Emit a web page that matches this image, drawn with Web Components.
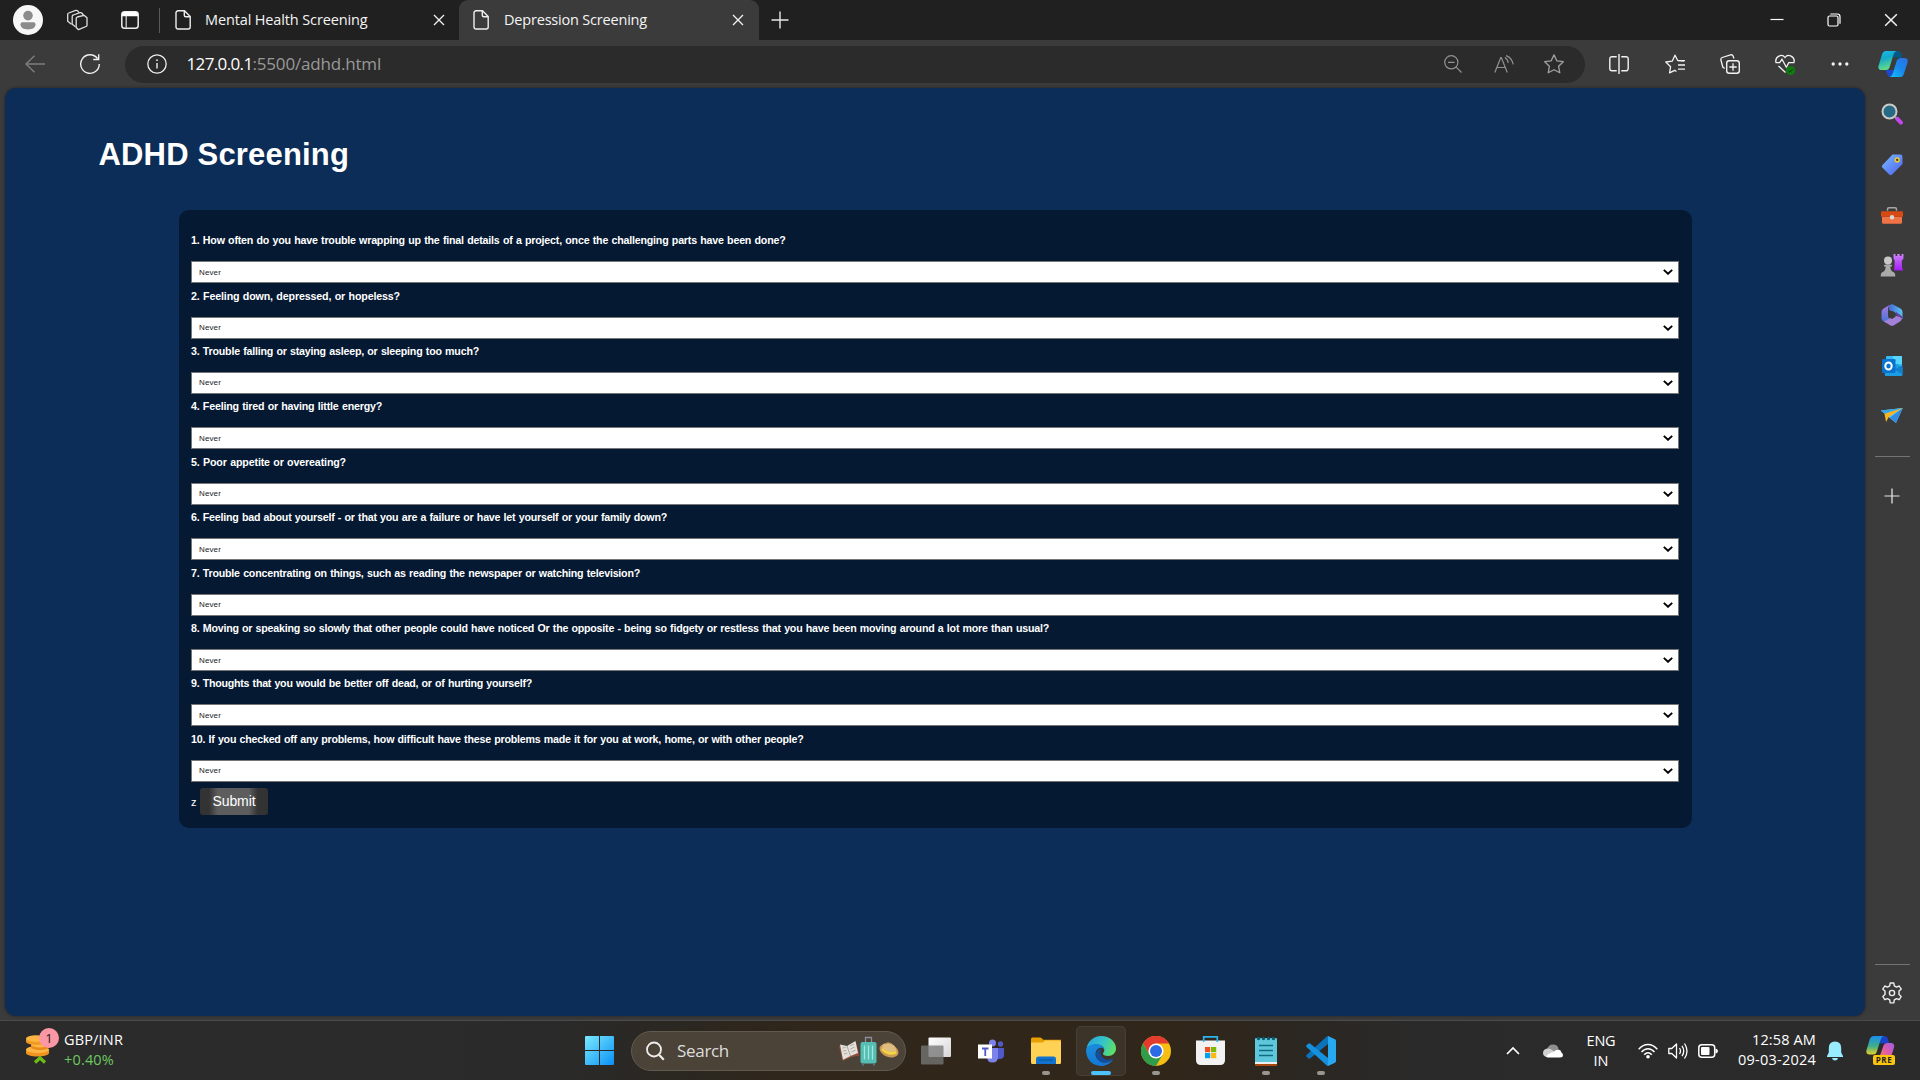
<!DOCTYPE html>
<html lang="en">
<head>
<meta charset="utf-8">
<title>Depression Screening</title>
<style>
html,body{margin:0;height:100%;overflow:hidden;background:#3b3b3b}
body{font-family:"Open Sans","Noto Sans",sans-serif;color:#fff}
</style>
</head>
<body>
<desktop-shell></desktop-shell>
<script>
const ICONS = {
avatar:['0 0 30 30','<circle cx="15" cy="15" r="15" fill="#f7f7f7"/><circle cx="15" cy="10.6" r="4.8" fill="#8b8b8b"/><path d="M7.5 19.3a2 2 0 0 1 2-2h11a2 2 0 0 1 2 2c0 3.400-3.200 5.200-7.500 5.200s-7.500-1.800-7.500-5.200z" fill="#8b8b8b"/>'],
spaces:['0 0 22 22','<g fill="none" stroke="#e0e0e0" stroke-width="1.300" stroke-linejoin="round"><path d="M10.200 9.300Q10.200 8.300 11.200 8L18 6.300l3 2.500v7.400q0 1-1 1.300L12.500 20.700 10.200 18.500z"/><path d="M9.500 17.800 6.200 15.200V7.400Q6.200 6.300 7.300 6L14 3.700q1.200-.3 2 .6l1.500 1.700"/><path d="M5.500 15.300 1.700 12.300V5.400Q1.700 4.300 2.700 4L9.700 1.400q1.200-.3 2 .5l1.300 1.700"/></g>'],
tabact:['0 0 18 18','<rect x=".8" y=".8" width="16.400" height="16.400" rx="2.800" fill="none" stroke="#eee" stroke-width="1.500"/><path d="M1 5.300V3.500A2.500 2.500 0 0 1 3.500 1h11A2.500 2.500 0 0 1 17 3.500v1.800z" fill="#fff"/><path d="M5.200 5v12" stroke="#ccc" stroke-width="1.300"/>'],
doc:['0 0 16 20','<path d="M3 .8h6.500L15.200 6.500V17a2 2 0 0 1-2 2H3a2 2 0 0 1-2-2V2.800a2 2 0 0 1 2-2zM9.300 1v4.200a1.500 1.500 0 0 0 1.500 1.500H15" fill="none" stroke="#eee" stroke-width="1.400"/>'],
x:['0 0 12 12','<path d="M1 1l10 10M11 1 1 11" stroke="#f2f2f2" stroke-width="1.300" fill="none"/>'],
plus:['0 0 18 18','<path d="M9 .5v17M.5 9h17" stroke="#e8e8e8" stroke-width="1.400"/>'],
min:['0 0 14 14','<path d="M.5 6.500h13" stroke="#fff" stroke-width="1.200"/>'],
restore:['0 0 14 14','<rect x="1" y="3" width="10" height="10" rx="1.500" fill="none" stroke="#fff" stroke-width="1.200"/><path d="M3.300 1h7A2.700 2.700 0 0 1 13 3.700v7" fill="none" stroke="#fff" stroke-width="1.200"/>'],
back:['0 0 20 18','<path d="M20 9H1.200M9.500.8 1 9l8.500 8.200" fill="none" stroke="#7d7d7d" stroke-width="1.400"/>'],
reload:['0 0 22 22','<path d="M18.500 5.500A9.300 9.300 0 1 0 20.300 11M19.700 1.200v5.300h-5.500" fill="none" stroke="#f0f0f0" stroke-width="1.400"/>'],
info:['0 0 20 20','<circle cx="10" cy="10" r="9.200" fill="none" stroke="#eee" stroke-width="1.300"/><path d="M10 9v5.500" stroke="#eee" stroke-width="1.400"/><circle cx="10" cy="6.200" r=".9" fill="#eee"/>'],
zoomout:['0 0 18 18','<circle cx="7.300" cy="7.300" r="6.600" fill="none" stroke="#929292" stroke-width="1.200"/><path d="M4 7.300h6.600M12.200 12.200l5.300 5.300" stroke="#929292" stroke-width="1.200"/>'],
aloud:['0 0 20 18','<path d="M.8 17.500 6.800 2.500h.5l6 15M3 12.500h8M10.800 2.500q3 1.600 3.500 5.300M12 .6q5.800 2 7.200 8.800" fill="none" stroke="#929292" stroke-width="1.200"/>'],
star:['0 0 20 20','<path d="m10 .9 2.800 5.900 6.500.9-4.700 4.600 1.200 6.500-5.800-3.100-5.800 3.100 1.200-6.500L.7 7.700l6.500-.9z" fill="none" stroke="#a0a0a0" stroke-width="1.300" stroke-linejoin="round"/>'],
split:['0 0 20 20','<path d="M7.700 2.700H3A2.200 2.200 0 0 0 .8 4.900v9.700A2.200 2.200 0 0 0 3 16.800h4.700M12.300 2.700H17a2.200 2.200 0 0 1 2.200 2.200v9.700a2.200 2.200 0 0 1-2.200 2.200h-4.700M10 0v20" fill="none" stroke="#f2f2f2" stroke-width="1.400"/>'],
favs:['0 0 20 20','<path d="M11.400 17.500 9.700 16.300 4.600 18.900l1-6.200L.8 8l6.500-.9L10 1.200 12.700 6.500l6.300.5M12.700 6.600H20M13 11h7M13 15.200h7M11.300 17.200 9.700 16.300" fill="none" stroke="#f2f2f2" stroke-width="1.300" stroke-linejoin="round"/>'],
coll:['0 0 20 20','<rect x="6.700" y="6.700" width="12.600" height="12.600" rx="2.500" fill="none" stroke="#f2f2f2" stroke-width="1.400"/><path d="M13 9.300v7.400M9.300 13h7.400M4.700 14.500 2.800 13 .9 6Q.6 4.200 2.200 3.500L10.500.8q2-.4 2.700 1.400l.7 2.300" fill="none" stroke="#f2f2f2" stroke-width="1.300"/>'],
heart:['0 0 20 21','<path d="M.9 8.500C-.2 2.500 7-1 10 3.500 13-1 20.200 2.500 19.100 8.500M.5 8.700h4.200L7 5.200l4.300 8 2.500-4.500h5.500M3.500 12l7 6.500" fill="none" stroke="#f2f2f2" stroke-width="1.300"/><circle cx="15.600" cy="16.500" r="4.500" fill="#0f7b0f"/><path d="m13.500 16.700 1.500 1.400 2.700-2.900" fill="none" stroke="#073d07" stroke-width="1"/>'],
dots:['0 0 18 6','<g fill="#f2f2f2"><circle cx="2.200" cy="3" r="1.700"/><circle cx="9" cy="3" r="1.700"/><circle cx="15.800" cy="3" r="1.700"/></g>'],
copilot:['0 0 30 28','<defs><linearGradient id="a" x1="0" y1="0" x2=".3" y2="1"><stop offset="0" stop-color="#19bdf1"/><stop offset=".45" stop-color="#14a9c9"/><stop offset="1" stop-color="#65dd86"/></linearGradient><linearGradient id="b" x1="1" y1="0" x2="0" y2="1"><stop offset="0" stop-color="#2e6ee0"/><stop offset=".5" stop-color="#1889ee"/><stop offset="1" stop-color="#12c5f4"/></linearGradient></defs><path d="M13 1h6q3.300 0 4.300 3l1 3.500h-9z" fill="#075985"/><path d="M16 27h-3q-3 0-4-3.200L7.500 20h10z" fill="#1b48ce"/><path d="M8 1h10.500q-2.200.8-3 3.500l-4 13q-.9 2.500-3.500 2.500H3.500Q-.2 20 .5 16L4 4.500Q5 1 8 1z" fill="url(#a)"/><path d="M22 27H11.500q2.500-.7 3.300-3.400l4-13q.9-2.600 3.700-2.600h4q3.700 0 3.200 4L26 23.400Q25 27 22 27z" fill="url(#b)"/>'],
sSearch:['0 0 24 24','<circle cx="9.500" cy="9.500" r="7" fill="#276a85" stroke="#c9cac8" stroke-width="2"/><path d="m14.700 14.500 2.200 2.200" stroke="#aaa" stroke-width="2"/><path d="m17.300 16.800 3.700 3.800" stroke="#c547ef" stroke-width="4" stroke-linecap="round"/>'],
sTag:['0 0 24 24','<defs><linearGradient id="t" x1="0" y1="0" x2="1" y2="1"><stop offset="0" stop-color="#7bbcff"/><stop offset="1" stop-color="#4b5df0"/></linearGradient></defs><g transform="translate(0 .6)"><path d="M12.500 2h7.800A2.300 2.300 0 0 1 22.500 4.300v7.200L11.800 22.200q-1.200.8-2.300 0L2.300 15q-.9-1.200 0-2.400z" fill="url(#t)"/><circle cx="17.200" cy="7.300" r="1.900" fill="#333" stroke="#f4cc25" stroke-width="1.500"/></g>'],
sTool:['0 0 24 24','<g transform="translate(0 .8)"><path d="M7.500 7V5.500Q7.500 4 9 4h6q1.500 0 1.500 1.500V7" fill="none" stroke="#a7a7a7" stroke-width="1.500"/><path d="M2 13h20v5.500a1.500 1.500 0 0 1-1.500 1.500h-17A1.500 1.500 0 0 1 2 18.500z" fill="#f07346"/><path d="M2 7.500h20q1 0 1 1v4.500H1V8.500q0-1 1-1z" fill="#d94a13"/><circle cx="12" cy="13.500" r="2.200" fill="#d8d8d8"/></g>'],
sGame:['0 0 24 24','<defs><linearGradient id="g" y1="0" y2="1" x2="0"><stop offset="0" stop-color="#cb83fa"/><stop offset="1" stop-color="#a51bf8"/></linearGradient></defs><path d="M13.500 1h2v2h1.800V1h2.400v2h1.800V1h2v4.500L21.700 8l.5 7 1 2.500h-9L14.700 8l-1.200-2.500z" fill="url(#g)"/><circle cx="8" cy="7.500" r="4" fill="#c8c8c8"/><path d="M4 12Q8 10.500 12 12v1.500h-1.700q.3 4.500 2.900 5.500 2.300.7 2 4.500H.8q-.3-3.800 2-4.500Q5.400 18 5.700 13.500H4z" fill="#aaa"/>'],
s365:['0 0 24 24','<defs><linearGradient id="q" x1="0" x2="1"><stop offset="0" stop-color="#4667d2"/><stop offset="1" stop-color="#58c5f2"/></linearGradient><linearGradient id="r" y1="0" y2="1" x2="0"><stop offset="0" stop-color="#a97bdc"/><stop offset="1" stop-color="#3f74da"/></linearGradient></defs><path d="M9 2.500 12 1l8.500 4.500q2 1 2 3.500v7l-7-5.500-3.500-2-3-1.500z" fill="url(#q)"/><path d="M10 1.800 3.500 5.500q-2 1.200-2 3.500v6q0 2.500 2 3.500l3 1.500 4-3.500q-2.500-1.500-2.500-4V6q0-2.500 2-4.200z" fill="url(#r)"/><path d="m4 18.500 11-6 7 2v.5q0 2.500-2 3.500L13.500 22.500q-1.500.8-3 0z" fill="#a481d9"/><path d="m15.500 11 7 5q0-2-.2-2.500L16 9z" fill="#6440a0"/><path d="m9 9.500 3-1.700 3.500 2v4L12 16l-3.500-2z" fill="#3b3b3b"/>'],
sOut:['0 0 24 24','<rect x="6" y="2" width="16" height="12" rx="1" fill="#35baf2"/><rect x="13" y="2" width="9" height="8" fill="#55d5ff"/><path d="M4 10h13.500l5 4v6.500a1.500 1.500 0 0 1-1.500 1.500H5z" fill="#1b9de3"/><path d="m14.500 15.500 8-4.500v9.500z" fill="#1280ce"/><rect x="2" y="5" width="13.500" height="14" rx="1.200" fill="#0873cf"/><ellipse cx="8.500" cy="12" rx="3.200" ry="3.500" fill="none" stroke="#fff" stroke-width="2"/>'],
sSend:['0 0 24 24','<path d="M.8 6.500 22.700 4 16 19l-5-4z" fill="#59c9fa"/><path d="m10 13.500 12.700-9.500L16 19z" fill="#348be4"/><path d="M.8 6.500 22.700 4 7 11.500z" fill="#37a7ea"/><path d="M4.500 9.700 22.700 4 9 12.800 6 18z" fill="#f8b51e"/>'],
gear:['0 0 22 22','<path d="M9.200 1h3.600l.5 2.900 2.200 1.200 2.700-1.100 2 3.200-2.200 1.800v3.500l2.200 2-2 3.200-2.700-1.100-2.200 1.300-.5 3H9.200l-.5-3-2.200-1.300L3.800 17.700l-2-3.200 2.200-2V9L1.800 7.200l2-3.200 2.700 1.100 2.200-1.200z" fill="none" stroke="#eee" stroke-width="1.400" stroke-linejoin="round"/><circle cx="11" cy="11" r="2.600" fill="none" stroke="#eee" stroke-width="1.400"/>'],
coins:['0 0 24 30','<path d="M0 15.500v3.200c0 5 23 5 23 0v-3.200z" fill="#ef9420"/><ellipse cx="11.500" cy="15.500" rx="11.500" ry="3.600" fill="#fdb642"/><path d="M5 10.500v2.500c0 4 18 4 18 0v-2.500z" fill="#e88a1c"/><ellipse cx="14" cy="10.500" rx="9" ry="3" fill="#fdb642"/><path d="M0 4.500V7.500c0 4.500 20 4.500 20 0V4.500z" fill="#f09a24"/><ellipse cx="10" cy="4.500" rx="10" ry="3.200" fill="#fdb642"/><path d="m9 28.500 5-4.500 5 4.500" fill="none" stroke="#6abf14" stroke-width="3.300"/>'],
start:['0 0 29 29','<defs><linearGradient id="w" x1="0" y1="0" x2="1" y2="1"><stop offset="0" stop-color="#7aeaff"/><stop offset="1" stop-color="#0a90f5"/></linearGradient></defs><path d="M0 1q0-1 1-1h13v14H0zM15 0h13q1 0 1 1v13H15zM0 15h14v14H1q-1 0-1-1zM15 15h14v13q0 1-1 1H15z" fill="url(#w)"/>'],
find:['0 0 20 20','<circle cx="9" cy="8.500" r="7" fill="none" stroke="#eee" stroke-width="1.800"/><path d="m14 13.700 4.800 5" stroke="#eee" stroke-width="2.200"/>'],
travel:['0 0 60 30','<path d="m0 10 8 1 9-4.500 3.500 13L13 21l-9.500 4z" fill="#8b4f3a"/><path d="m1 8.500 7 1.500 8.500-5 2.500 12-7 2.800-8 4z" fill="#e5e1da"/><path d="M8 10l3.500 10M3.500 12l3-.5M4 15l3.300-.5M5 18l3.300-.8M11 10l4-2M11.500 13l4-2M12.500 16l4-2" stroke="#999" stroke-width=".8"/><path d="M26.500 7V1.500h6V7" fill="none" stroke="#8d8da0" stroke-width="1.300"/><rect x="21.500" y="6" width="16" height="21.500" rx="2" fill="#55bdb3"/><path d="M25.500 9.500v14M29.500 9.500v14M33.500 9.500v14" stroke="#a0e8df" stroke-width="1.300"/><path d="M24 27.500v2M35 27.500v2" stroke="#5b6e8d" stroke-width="2"/><ellipse cx="50" cy="14.500" rx="9.800" ry="6.500" transform="rotate(22 50 14.500)" fill="#c99b5a"/><path d="M43 13q0-6.500 6-6.300 7.500.3 8.500 9-7 3.300-14.500-2.700z" fill="#dfbd80"/><path d="M46 8q4-2.800 8 1" fill="none" stroke="#ac8047" stroke-width="1"/><path d="M43 12q6.500 6 14.300 3.200l.2 2.600q-9 3-15-3.800z" fill="#f5d53c"/>'],
task:['0 0 30 28','<defs><linearGradient id="v" x1="0" y1="0" x2="1" y2="1"><stop offset="0" stop-color="#fff"/><stop offset="1" stop-color="#d6d6d6"/></linearGradient></defs><rect x="7.500" y=".5" width="22.500" height="19.500" rx="1" fill="url(#v)"/><rect x="0" y="8.500" width="22.500" height="19" rx="1" fill="#777" fill-opacity=".78"/>'],
teams:['0 0 26 24','<circle cx="22.500" cy="5" r="2.700" fill="#5059c9"/><path d="M18 9h8v7q0 4-4.500 4H18z" fill="#5059c9"/><circle cx="14.500" cy="4" r="3.500" fill="#7b83eb"/><path d="M8.500 9H20v9q0 5.500-5.500 5.500T9 18z" fill="#7b83eb"/><rect x="0" y="5.500" width="14" height="14" fill="#fff"/><path d="M4 9.500h6.500M7.250 9v8" stroke="#5059c9" stroke-width="1.800"/>'],
folder:['0 0 30 28','<path d="M0 2q0-1.500 1.500-1.500H9q1 0 2 1l1.200 1.300H30V8H0z" fill="#e6a100"/><path d="M0 5.500h12L14 3.500h14.500q1.500 0 1.500 1.500v21q0 1-1.500 1h-27Q0 27 0 25.500z" fill="#ffd255"/><path d="M5 27v-5q0-2.500 2.500-2.500h15Q25 19.500 25 22v5z" fill="#1173cd"/><path d="M8 23h14" stroke="#07519c" stroke-width="1"/>'],
edge:['0 0 30 30','<defs><linearGradient id="e" x1="0" x2="1" y1=".3" y2=".6"><stop offset="0" stop-color="#27a6e2"/><stop offset=".55" stop-color="#37c6c4"/><stop offset="1" stop-color="#61e060"/></linearGradient><linearGradient id="f" x1="0" y1="0" x2=".4" y2="1"><stop offset="0" stop-color="#1a8ee0"/><stop offset="1" stop-color="#1377d3"/></linearGradient></defs><path d="M.5 13C1.500 5.500 7.500 0 15 0c9 0 15 6 15 12.500 0 4.500-3.500 7.500-8 7.500-3.500 0-5-1.200-5-2.300 0-1 1.300-1.400 1.300-3.700C18.300 10 14 8.500 10 8.500S2 10 .5 13z" fill="url(#e)"/><path d="M.2 13C2 9.500 6 8 9.500 8c5 0 8.800 2.700 8.800 6 0-1.500-2.500-3-5-2-5 2-5.300 9.500.3 13 4.500 2.800 10 1.500 13.400-1.500C24.500 27.500 20 30 15 30 6 30-.8 22.500.2 13z" fill="url(#f)"/><path d="M10 19c.5 6 7 9.500 13.500 6.500 2-.8 3.800-2.300 3.500-2.700-.3-.3-1.500.5-3.500.8-5 .7-8.500-2.600-9-6.600-.3-2 .3-3.600 1-4.600-3 .5-5.800 3-5.500 6.600z" fill="#124e9d"/>'],
chrome:['0 0 30 30','<circle cx="15" cy="15" r="15" fill="#f7bf14"/><path d="M2 7.500A15 15 0 0 1 28 7.500H15L8.500 18.700z" fill="#e33b2e"/><path d="M2 7.500A15 15 0 0 0 15 30l6.500-11.200H8.500z" fill="#2f9d49"/><circle cx="15" cy="15" r="7.600" fill="#fff"/><circle cx="15" cy="15" r="6" fill="#2d6be6"/>'],
store:['0 0 30 29','<path d="M0 4.500h29V24q0 5-5 5H5q-5 0-5-5z" fill="#f2f2f2"/><path d="M7.700 6V.9h13.600V6" fill="none" stroke="#2bb5ed" stroke-width="1.700"/><path fill="#f04e23" d="M9 11h5.200v5.200H9z"/><path fill="#7cb900" d="M15 11h5.200v5.200H15z"/><path fill="#00a2ed" d="M9 17h5.200v5.200H9z"/><path fill="#fdb813" d="M15 17h5.200v5.200H15z"/>'],
note:['0 0 22 30','<path d="M0 25h22v4q0 1-1 1H1q-1 0-1-1z" fill="#a8480f"/><path d="M0 24h22v4H0z" fill="#eee"/><path d="M0 3q0-1 1-1h20q1 0 1 1v23H0z" fill="#5fc7dc"/><path d="M4 9.500h14M4 14.500h14M4 19.500h14" stroke="#126d84" stroke-width="1.700"/><g fill="#0d5a70"><circle cx="3.500" cy="2.500" r="1.700"/><circle cx="8.500" cy="2.500" r="1.700"/><circle cx="13.500" cy="2.500" r="1.700"/><circle cx="18.500" cy="2.500" r="1.700"/></g>'],
code:['0 0 30 30','<path d="m22 0 7 3.200q1 .6 1 1.700v20.200q0 1.100-1 1.700L22 30z" fill="#27a9f1"/><path d="M22 8 4 22.500q-.8.500-1.500 0L.5 20.800q-.8-.9 0-1.700L20.500.800Q21.200.2 22 0z" fill="#0a73ba"/><path d="M22 22 4 7.500q-.8-.5-1.500 0L.5 9.200q-.8.900 0 1.700l20 18.300q.7.600 1.500.8z" fill="#1690dc"/>'],
up:['0 0 14 9','<path d="m1 8 6-6 6 6" fill="none" stroke="#fff" stroke-width="1.700"/>'],
cloud:['0 0 20 14','<path d="M4 6Q5 .5 10 .5q4.500 0 5.500 4L10 9z" fill="#8f8f8f"/><path d="M4.500 4.500Q8 4 10.500 7L14 9l-9 4Q0 13 0 9q0-4 4.500-4.500z" fill="#cfcfcf"/><path d="M3 12.500Q6 8.500 10.500 8q2.500-3 5-2.500 2.500.7 3 3Q20 9.500 20 11q0 2.500-3 2.500H5q-1.500 0-2-1z" fill="#fff"/>'],
wifi:['0 0 20 16','<g fill="none" stroke="#fff" stroke-width="1.500"><path d="M.7 6.200Q5 1.500 10 1.500t9.300 4.700M3.500 9Q6.500 5.700 10 5.700T16.500 9M6.200 11.700Q8 9.700 10 9.700t3.800 2"/></g><circle cx="10" cy="13.700" r="1.800" fill="#fff"/>'],
sound:['0 0 20 18','<path d="M.8 6.500h3L8.500 2v14L3.800 11.500h-3zM11.500 6q2 3 0 6M14 3.800q3.500 5.200 0 10.400M16.500 1.500q5 7.500 0 15" fill="none" stroke="#fff" stroke-width="1.300" stroke-linejoin="round"/>'],
batt:['0 0 20 14','<rect x=".8" y=".8" width="15.900" height="12.400" rx="3" fill="none" stroke="#fff" stroke-width="1.500"/><rect x="3" y="3" width="8.500" height="8" rx="1" fill="#fff"/><path d="M17.500 4.500Q20 5 20 7t-2.500 2.500z" fill="#fff"/>'],
bell:['0 0 16 20','<path d="M8 .5q6.200 0 6.200 6.500v4.500L16 15v1H0v-1l1.800-3.500V7Q1.800.500 8 .5zM5 17h6q-.5 2.500-3 2.500T5 17z" fill="#99ebff"/>'],
pre:['0 0 30 29','<defs><linearGradient id="m" x1="0" y1="0" x2="0" y2="1"><stop offset="0" stop-color="#198ff0"/><stop offset=".55" stop-color="#3eae8a"/><stop offset="1" stop-color="#e8cf25"/></linearGradient><linearGradient id="n" x1="1" y1="0" x2="0" y2="1"><stop offset="0" stop-color="#a25bea"/><stop offset=".5" stop-color="#dd5daa"/><stop offset="1" stop-color="#f58151"/></linearGradient></defs><path d="M12 0h6q3 0 4 3l1.200 4.500h-9z" fill="#1c40c7"/><path d="M8 0h9.500q-2 .8-2.800 3.500l-4 12.500q-.8 2.500-3.200 2.500H3.500Q-.5 18.500.5 14L3.700 3.500Q4.700 0 8 0z" fill="url(#m)"/><path d="M20 22.500h-7l4.500-13Q18.300 7 21 7h4q4 0 3 4.500l-2.500 8q-1 3-5.500 3z" fill="url(#n)"/>'],
chev:['0 0 10 6','<path d="m.8.9 4.200 3.900L9.200.9" fill="none" stroke="#000" stroke-width="1.900"/>']
};
const define = (name, markup, after) => {
  const t = document.createElement('template');
  customElements.define(name, class extends HTMLElement {
    connectedCallback() {
      if (this.shadowRoot) return;
      const r = this.attachShadow({mode: 'open'});
      t.innerHTML = typeof markup === 'function' ? markup(this) : markup;
      r.append(t.content.cloneNode(true));
      if (after) after(this, r);
    }
  });
};

// An inline drawing centred in a cell: s = drawing width, w = cell width.
define('ui-icon', el => {
  const [vb, body] = ICONS[el.getAttribute('n')];
  const d = vb.split(' ');
  const s = el.getAttribute('s') || d[2];
  const h = s * d[3] / d[2];
  const w = el.getAttribute('w');
  return `<style>:host{display:flex;flex:none;align-items:center;justify-content:center;${w ? `width:${w}px` : ''}}svg{display:block;flex:none}</style><svg width="${s}" height="${h}" viewBox="${vb}">${body}</svg>`;
});

// A single line of text, tracked to a set width.
define('fit-text', `<style>:host{display:block;white-space:nowrap;flex:none}span{display:inline-block}</style><span><slot></slot></span>`, (el, r) => {
  const w = +el.getAttribute('w'), s = r.querySelector('span');
  s.style.letterSpacing = (w - s.getBoundingClientRect().width) / el.textContent.length + 'px';
});

define('browser-tab', `<style>
:host{display:flex;align-items:center;box-sizing:border-box;height:40px;width:299px;padding:0 14px 0 15px;font-size:14.500px;color:#f4f4f4}
:host([active]){background:#3b3b3b;border-radius:9px 9px 0 0;width:300px;padding:0 15px 0 14px}
slot{display:block;margin:0 0 2px 14px;flex:1}
:host([active]) slot{margin-left:15px}
ui-icon{flex:none}</style><ui-icon n="doc"></ui-icon><slot></slot><ui-icon n="x" s="12"></ui-icon>`);

define('tab-strip', `<style>
:host{display:flex;height:40px;background:#202020;align-items:center}
.sep{width:1px;height:25px;background:#5a5a5a;margin-left:-1px}
.win{display:flex;margin-left:auto}
</style>
<ui-icon n="avatar" w="56"></ui-icon><ui-icon n="spaces" w="42"></ui-icon><ui-icon n="tabact" w="62" style="padding-left:1px;margin-right:-1px"></ui-icon><div class="sep"></div>
<browser-tab><fit-text w="162.500">Mental Health Screening</fit-text></browser-tab>
<browser-tab active><fit-text w="143">Depression Screening</fit-text></browser-tab>
<ui-icon n="plus" w="41"></ui-icon>
<div class="win"><ui-icon n="min" w="57"></ui-icon><ui-icon n="restore" w="57"></ui-icon><ui-icon n="x" s="14" w="58"></ui-icon></div>`);

define('tool-bar', `<style>
:host{display:flex;height:48px;align-items:center;background:#3b3b3b}
.pill{display:flex;align-items:center;width:1460px;height:37px;border-radius:19px;background:#2b2b2b;margin-left:15px;font-size:17px}
.url{display:flex;color:#999;flex:1;padding-bottom:2px}.url :first-child{color:#fff}
.acts{display:flex;margin-left:6px}
</style>
<ui-icon n="back" w="70"></ui-icon><ui-icon n="reload" w="40"></ui-icon>
<div class="pill"><ui-icon n="info" w="62" style="padding-left:1px;margin-right:-1.500px"></ui-icon><div class="url"><fit-text w="66">127.0.0.1</fit-text><fit-text w="128.500">:5500/adhd.html</fit-text></div><ui-icon n="zoomout" w="50"></ui-icon><ui-icon n="aloud" w="51"></ui-icon><ui-icon n="star" w="50" style="margin-right:6px"></ui-icon></div>
<div class="acts"><ui-icon n="split" w="56"></ui-icon><ui-icon n="favs" w="55"></ui-icon><ui-icon n="coll" w="55"></ui-icon><ui-icon n="heart" w="55"></ui-icon><ui-icon n="dots" w="55"></ui-icon><ui-icon n="copilot" w="51"></ui-icon></div>`);

define('question-row', `<style>
:host{display:flex;flex-direction:column;height:55.430px}
.q{font-weight:700;font-size:10.670px;line-height:14px;height:28px;color:#fff;word-spacing:.6px}
.sel{display:flex;align-items:center;justify-content:space-between;box-sizing:border-box;height:22px;border:1px solid #767676;background:#fff;color:#222;font-size:8px;line-height:20px;padding:0 5px 0 7px}
.sel fit-text{padding-top:1px}
</style><div class="q"><slot></slot></div><div class="sel" role="combobox"><fit-text w="22">Never</fit-text><ui-icon n="chev"></ui-icon></div>`);

define('submit-button', `<style>
button{display:block;width:68px;height:27px;border:0;border-radius:3px;padding:0;font:14px/26px "Liberation Sans",Arial,sans-serif;color:#fff;background:linear-gradient(90deg,#333 13%,#5d5d5d 26%,#5d5d5d 72%,#333 85%)}
fit-text{text-align:center}
</style><button><fit-text w="43">Submit</fit-text></button>`);

const QS = [
['1. How often do you have trouble wrapping up the final details of a project, once the challenging parts have been done?',594.5],
['2. Feeling down, depressed, or hopeless?',209],
['3. Trouble falling or staying asleep, or sleeping too much?',288],
['4. Feeling tired or having little energy?',191],
['5. Poor appetite or overeating?',155],
['6. Feeling bad about yourself - or that you are a failure or have let yourself or your family down?',476],
['7. Trouble concentrating on things, such as reading the newspaper or watching television?',449],
['8. Moving or speaking so slowly that other people could have noticed Or the opposite - being so fidgety or restless that you have been moving around a lot more than usual?',858],
['9. Thoughts that you would be better off dead, or of hurting yourself?',341],
['10. If you checked off any problems, how difficult have these problems made it for you at work, home, or with other people?',612.5]];

define('screening-page', `<style>
:host{display:flex;flex-direction:column;box-sizing:border-box;width:1860px;height:928px;background:#0c2d57;border-radius:11px;box-shadow:0 0 3px #222;font-family:"Liberation Sans",Arial,sans-serif;color:#fff}
h1{margin:49px 0 0 93.500px;font-size:31px;line-height:36px;font-weight:700;height:73px}
.card{box-sizing:border-box;width:1513px;height:618px;margin-left:174px;background:#051932;border-radius:10px;padding:23.100px 13px 0 12px}
.foot{display:flex;align-items:flex-start;font-size:11px;padding-top:.6px}
.foot span{width:9px;line-height:28px}
</style>
<h1><fit-text w="250.500">ADHD Screening</fit-text></h1>
<div class="card">${QS.map(([t, w]) => `<question-row><fit-text w="${w}">${t}</fit-text></question-row>`).join('')}
<div class="foot"><span>z</span><submit-button></submit-button></div></div>`);

define('side-bar', `<style>
:host{display:flex;flex-direction:column;align-items:center;box-sizing:border-box;width:54px;height:932px;padding-top:1px}
ui-icon{height:50.300px}
.line{width:35px;height:1px;background:#737373;flex:none}
.end{margin-top:auto;display:flex;flex-direction:column;align-items:center}
</style>
<ui-icon n="sSearch"></ui-icon><ui-icon n="sTag"></ui-icon><ui-icon n="sTool"></ui-icon><ui-icon n="sGame"></ui-icon><ui-icon n="s365"></ui-icon><ui-icon n="sOut"></ui-icon><ui-icon n="sSend"></ui-icon>
<div class="line" style="margin-top:15px"></div><ui-icon n="plus" s="16" style="margin-top:14px"></ui-icon>
<div class="end"><div class="line"></div><ui-icon n="gear" style="height:55px"></ui-icon></div>`);

define('app-cell', `<style>
:host{display:flex;flex-direction:column;align-items:center;width:50px;height:50px;box-sizing:border-box;border-radius:5px}
:host([active]){background:#3d3429;box-shadow:inset 0 0 0 1px #483f34}
.i{display:flex;height:45px;padding-top:5px;box-sizing:border-box;align-items:center}
.bar{height:4px;width:8px;border-radius:2px;background:transparent}
:host([run]) .bar{background:#9a958e}:host([active]) .bar{background:#4cc2ff;width:20px}
</style><div class="i"><slot></slot></div><div class="bar"></div>`);

define('search-pill', `<style>
:host{display:flex;align-items:center;box-sizing:border-box;width:275px;height:40px;border-radius:20px;background:#4b4337;border:1px solid #625a4e;padding:0 6px 0 13px;font-size:17px;color:#ddd}
fit-text{margin-left:12px;flex:1;line-height:24px}</style><ui-icon n="find"></ui-icon><fit-text w="52">Search</fit-text><ui-icon n="travel"></ui-icon>`);

define('task-bar', `<style>
:host{display:flex;align-items:center;box-sizing:border-box;height:60px;border-top:1px solid #4b4b4b;background:linear-gradient(90deg,#2b2b2b 0,#2a2a2a 29%,#2b2720 36%,#30261a 42%,#30261a 62%,#2b2722 68%,#2a2a2a 74%,#2b2b2b);font-size:14.500px;line-height:20px}
.wid{display:flex;width:574px;padding-left:26px;box-sizing:border-box}
.wid>:last-child,.r{padding-bottom:2px}
.coin{position:relative;width:38px;height:40px}
.coin ui-icon{justify-content:flex-start;padding-top:4px}
.badge{position:absolute;left:13px;top:-2px;width:20px;height:20px;border-radius:50%;background:#fb96a4;color:#222;text-align:center;font-size:13px}
.green{color:#6bc95f}
.apps{display:flex;gap:5px;align-items:center}
.tray{display:flex;align-items:center;margin-left:auto}
.c{display:flex;flex-direction:column;align-items:center;width:56px}
.r{display:flex;flex-direction:column;align-items:flex-end;width:89px}
.pre{position:relative;width:30px;margin:0 24px 0 12px}
.pre b{position:absolute;left:7px;top:19px;width:22px;height:10px;border-radius:2px;background:#fdc50e;color:#222;font:700 8px/10px "Open Sans",sans-serif;text-align:center;letter-spacing:.6px}
</style>
<div class="wid"><div class="coin"><ui-icon n="coins"></ui-icon><div class="badge">1</div></div><div><fit-text w="59">GBP/INR</fit-text><fit-text class="green" w="50">+0.40%</fit-text></div></div>
<div class="apps">
<app-cell><ui-icon n="start"></ui-icon></app-cell><search-pill style="margin-left:2px"></search-pill>
<app-cell><ui-icon n="task"></ui-icon></app-cell><app-cell><ui-icon n="teams"></ui-icon></app-cell><app-cell run><ui-icon n="folder"></ui-icon></app-cell><app-cell run active><ui-icon n="edge"></ui-icon></app-cell><app-cell run><ui-icon n="chrome"></ui-icon></app-cell><app-cell><ui-icon n="store"></ui-icon></app-cell><app-cell run><ui-icon n="note"></ui-icon></app-cell><app-cell run><ui-icon n="code"></ui-icon></app-cell>
</div>
<div class="tray"><ui-icon n="up" w="40"></ui-icon><ui-icon n="cloud" w="40"></ui-icon><div class="c"><fit-text w="29">ENG</fit-text><fit-text w="15">IN</fit-text></div><ui-icon n="wifi" w="38"></ui-icon><ui-icon n="sound" w="22"></ui-icon><ui-icon n="batt" w="38"></ui-icon>
<div class="r"><fit-text w="64">12:58 AM</fit-text><fit-text w="78">09-03-2024</fit-text></div><ui-icon n="bell" w="38"></ui-icon>
<div class="pre"><ui-icon n="pre"></ui-icon><b>PRE</b></div></div>`);

define('desktop-shell', `<style>
:host{display:flex;flex-direction:column;width:1920px;height:1080px;background:#3b3b3b}
.mid{display:flex;height:932px;padding-left:5px}
</style><tab-strip></tab-strip><tool-bar></tool-bar><div class="mid"><screening-page></screening-page><side-bar></side-bar></div><task-bar></task-bar>`);
</script>
</body>
</html>
